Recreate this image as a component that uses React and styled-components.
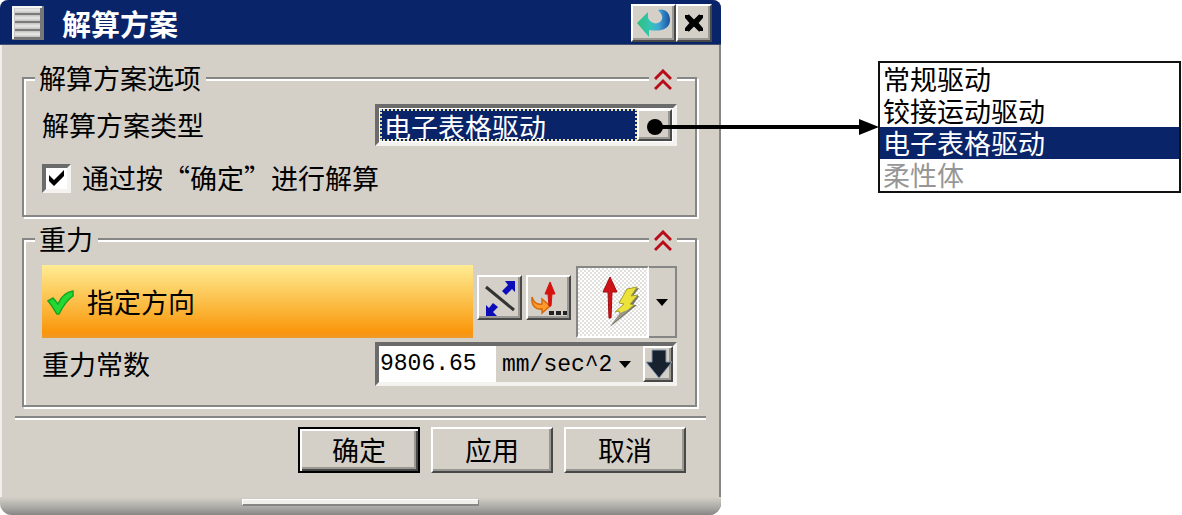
import React, { useState } from "react";
import styled, { createGlobalStyle, css } from "styled-components";

const navy = "#0a246a";
const face = "#d4d0c8";
const shade = "#868684";
const dark = "#484848";
const sans = '"Noto Sans CJK SC", "Noto Sans", sans-serif';
const mono = '"Liberation Mono", monospace';

const GlobalStyle = createGlobalStyle`
  *, *::before, *::after { box-sizing: border-box; }
  body { margin: 0; background: #fff; color: #000; font: 27px/32px ${sans}; }
  button, input, select { margin: 0; color: inherit; font: inherit; }
`;

const raised = css`
  border: 2px solid;
  border-color: #fff ${dark} ${dark} #fff;
  box-shadow: inset -2px -2px 0 #9a9892;
  background: ${face};
`;

const sunken = css`
  border: 4px solid;
  border-color: #6b6b6b #f4f3f0 #f4f3f0 #6b6b6b;
`;

const Page = styled.main`
  display: grid;
  grid-template-columns: minmax(0, 1fr) 157px 303px;
  align-items: start;
  padding-right: 1px;
`;

const Dialog = styled.form`
  display: flex;
  flex-direction: column;
  overflow: hidden;
  border-radius: 8px 8px 12px 12px;
  background: ${face};
  box-shadow: inset 2px 0 0 #f0efec, inset -2px 0 0 ${shade};
`;

const TitleBar = styled.header`
  display: flex;
  align-items: center;
  height: 45px;
  padding: 1px 9px 0 12px;
  background: ${navy};
  border-bottom: 1px solid #44506e;
  color: #fff;
`;

const Title = styled.h1`
  flex: 1;
  margin: 0;
  padding-left: 18px;
  font-size: 29px;
  line-height: 40px;
  font-weight: 700;
`;

const TitleButton = styled.button`
  ${raised}
  display: grid;
  place-items: center;
  width: ${(p) => (p.$wide ? 45 : 36)}px;
  height: 38px;
  padding: 0;
`;

const Body = styled.div`
  display: flex;
  flex-direction: column;
  gap: 8px;
  padding: 19px 24px 9px 22px;
`;

const GroupShell = styled.div`
  position: relative;
`;

const GroupBox = styled.fieldset`
  display: flex;
  flex-direction: column;
  gap: ${(p) => p.$gap}px;
  min-width: 0;
  margin: 0;
  padding: 12px 18px 19px;
  border: 2px solid ${shade};
  box-shadow: inset 2px 2px 0 #fff, 2px 2px 0 #fff;
`;

const Legend = styled.legend`
  margin-left: -7px;
  padding: 0 5px 0 4px;
  background: ${face};
  line-height: 28px;
`;

const Collapse = styled.button`
  position: absolute;
  top: 0;
  right: 20px;
  display: grid;
  place-items: center;
  width: 28px;
  height: 32px;
  padding: 0;
  border: 0;
  background: ${face};
`;

const Row = styled.div`
  display: grid;
  grid-template-columns: minmax(0, 1fr) 302px;
  align-items: center;
`;

const ComboFrame = styled.div`
  ${sunken}
  display: flex;
  height: ${(p) => (p.$tall ? 44 : 42)}px;
  padding: ${(p) => (p.$tall ? 0 : 1)}px;
  background: ${(p) => (p.$tall ? face : "#fff")};
`;

const TypeSelect = styled.select`
  flex: 1;
  min-width: 0;
  appearance: none;
  padding: 2px 2px 0;
  border: 2px dotted #e8dfa8;
  border-radius: 0;
  outline: 0;
  background: ${navy};
  color: #fff;
  line-height: 28px;
`;

const SquareButton = styled.button`
  ${raised}
  display: grid;
  place-items: center;
  flex: none;
  width: ${(p) => p.$width}px;
  height: ${(p) => (p.$height ? `${p.$height}px` : "auto")};
  padding: 0;
`;

const CheckRow = styled.label`
  display: flex;
  align-items: center;
  gap: 11px;
  height: 36px;
`;

const CheckBox = styled.input`
  ${sunken}
  appearance: none;
  width: 29px;
  height: 29px;
  background: #fff;
  &:checked {
    background: #fff url("data:image/svg+xml,%3Csvg xmlns='http://www.w3.org/2000/svg' viewBox='0 0 21 21'%3E%3Cpath d='M3 7v6l5 5L18 8V2L8 12Z'/%3E%3C/svg%3E") center / 21px no-repeat;
  }
`;

const DirectionRow = styled.div`
  display: flex;
  align-items: center;
`;

const DirectionStep = styled.div`
  display: flex;
  align-items: center;
  gap: 12px;
  flex: 1;
  height: 73px;
  margin-right: 4px;
  padding-left: 4px;
  background: linear-gradient(#ffec94, #fbb63a 60%, #fa960c 92%, #ee9a28);
`;

const StepTools = styled.div`
  display: flex;
  gap: 4px;
  margin: 0 5px 8px 0;
`;

const VectorButton = styled.button`
  display: grid;
  place-items: center;
  width: 73px;
  height: 72px;
  padding: 0;
  border: 2px solid;
  border-color: ${shade} #fff #fff ${shade};
  background: repeating-conic-gradient(#fff 0 25%, #e2e0dc 0 50%) 0 0 / 4px 4px;
`;

const VectorMenuButton = styled.button`
  display: grid;
  place-items: center;
  width: 28px;
  height: 72px;
  padding: 0;
  border: 2px solid ${shade};
  border-left: 0;
  background: ${face};
`;

const NumberBox = styled.input`
  width: 117px;
  height: 100%;
  padding: 0 1px;
  border: 0;
  outline: 0;
  background: #fff;
  font: 23px/32px ${mono};
`;

const UnitSelect = styled.select`
  appearance: none;
  flex: 1;
  min-width: 0;
  padding: 2px 0 0 6px;
  border: 0;
  outline: 0;
  background: transparent;
  font: 23px/32px ${mono};
`;

const UnitCaret = styled.span`
  display: grid;
  place-items: center;
  width: 28px;
  padding-right: 8px;
`;

const Divider = styled.hr`
  align-self: stretch;
  height: 4px;
  margin: 0 15px;
  border: 0;
  border-top: 2px solid ${shade};
  background: #fff;
`;

const Actions = styled.div`
  display: flex;
  justify-content: flex-end;
  gap: 11px;
  padding: 7px 35px 24px;
`;

const ActionButton = styled.button`
  ${raised}
  width: 122px;
  height: 46px;
  padding: 0;
  ${(p) => p.$primary && css`
    border-color: #000;
    box-shadow: inset 2px 2px 0 #fff, inset -2px -2px 0 ${dark}, inset -4px -4px 0 #9a9892;
  `}
`;

const Footer = styled.footer`
  display: flex;
  justify-content: center;
  height: 18px;
  padding-top: 2px;
  background: linear-gradient(${face}, #aaa8a4 60%, #858585);
`;

const Grip = styled.span`
  width: 33%;
  height: 7px;
  border: 1px solid;
  border-color: #fff ${shade} ${shade} #fff;
  border-bottom-width: 2px;
  background: #f0efec;
`;

const Connector = styled.div`
  position: relative;
  align-self: stretch;
`;

const ConnectorLine = styled.svg`
  position: absolute;
  top: 117px;
  right: -1px;
`;

const OptionList = styled.ul`
  margin: 61px 0 0;
  padding: 0;
  border: 2px solid #111;
  background: #fff;
  list-style: none;
`;

const Option = styled.li`
  height: 32px;
  padding-left: 3px;
  background: ${(p) => (p.$state === "selected" ? navy : "#fff")};
  color: ${(p) => ({ selected: "#fff", disabled: "#969696" })[p.$state] || "#000"};
  white-space: nowrap;
`;

const MenuIcon = () => (
  <svg width="32" height="34" viewBox="0 0 32 34" aria-hidden="true">
    <path d="M0 0h32v34H0z" fill="#777" />
    <path d="M0 0h30v2H2v31H0z" fill="#f4f4f4" />
    <path d="M2 2h26v29H2z" fill="#c8c8c5" />
    <path d="M3 4h25M3 12h25M3 20h25M3 28h25" stroke="#e2e2e0" strokeWidth="3" />
    <path d="M3 8h25M3 16h25M3 24h25" stroke="#7b7b7b" strokeWidth="2" />
  </svg>
);

const ResetIcon = () => (
  <svg width="36" height="32" viewBox="0 0 36 32" aria-hidden="true">
    <defs>
      <linearGradient id="reset" x1="0" x2="1">
        <stop offset="0" stopColor="#2cc07a" />
        <stop offset=".4" stopColor="#35c4b4" />
        <stop offset=".65" stopColor="#3fa9d6" />
        <stop offset="1" stopColor="#1b4fa0" />
      </linearGradient>
    </defs>
    <path d="M1 16 12 5v6c3 7 12 7 14 1 1-3-1-6-4-9 6-2 12 2 12 10 0 9-9 12-21 10v7Z" fill="url(#reset)" />
  </svg>
);

const CloseIcon = () => (
  <svg width="22" height="22" viewBox="0 0 22 22" aria-hidden="true">
    <path d="M4 3v2l5 6-5 6v2M18 3v2l-5 6 5 6v2" fill="none" stroke="#000" strokeWidth="4" />
    <path d="M4 4 18 18M18 4 4 18" stroke="#000" strokeWidth="5" />
  </svg>
);

const ChevronsIcon = () => (
  <svg width="18" height="22" viewBox="0 0 18 22" aria-hidden="true">
    <path d="m1 10 8-8 8 8M1 20l8-8 8 8" fill="none" stroke="#b80c18" strokeWidth="3" />
  </svg>
);

const CheckIcon = () => (
  <svg width="29" height="28" viewBox="0 0 29 28" aria-hidden="true">
    <path d="m2 13 5-3 5 6C15 9 20 4 27 3v5c-6 4-10 10-14 18h-2C8 22 6 17 2 13Z" fill="#22d934" stroke="#14a524" strokeWidth="1.5" />
  </svg>
);

const ReverseIcon = () => (
  <svg width="38" height="38" viewBox="0 0 38 38" aria-hidden="true">
    <path d="M5 8 33 31" stroke="#333" strokeWidth="3" />
    <path d="M34 2v11l-3-3-6 6-4-4 6-6-3-4ZM5 37V26l3 3 4-5 5 4-5 5 4 4Z" fill="#0c0cb8" />
  </svg>
);

const VectorDialogIcon = () => (
  <svg width="38" height="38" viewBox="0 0 38 38" aria-hidden="true">
    <path d="M2 18c2 6 6 8 10 7v-5l8 7-8 7v-4C6 31 1 27 2 18Z" fill="#ff9a2b" stroke="#d66a0c" strokeWidth="1.5" />
    <path d="m20 3 5 12h-3l-1 12h-2l-1-12h-3Z" fill="#d5120f" stroke="#d5120f" />
    <path d="M19 32h5v4h-5zM26 32h5v4h-5zM33 32h4v4h-4z" fill="#222" />
  </svg>
);

const InferredVectorIcon = () => (
  <svg width="54" height="52" viewBox="-16 0 54 52" aria-hidden="true">
    <path d="M8 1 15 16H10L9 42H7L6 16H1Z" fill="#cf1215" stroke="#a00c10" />
    <path d="m27 13 10-1-6 8h6l-6 9h4L8 51l12-15-5-1 9-7-6-1Z" fill="#77756a" />
    <path d="m25 13 10-2-6 9 7-1-8 9 4 1-13 11-2-5-4 1 9-8-5-1Z" fill="#ece33a" stroke="#a39f33" />
    <path d="m8 50 10-13 10-4Z" fill="#99968b" />
  </svg>
);

const CaretIcon = () => (
  <svg width="14" height="8" viewBox="0 0 14 8" aria-hidden="true">
    <path d="M1 1h12L7 8Z" />
  </svg>
);

const DownArrowIcon = () => (
  <svg width="28" height="30" viewBox="0 0 28 30" aria-hidden="true">
    <path d="M7 1h14v12h6L14 29 1 13h6Z" fill="#17222e" stroke="#8799ad" strokeWidth="1" />
  </svg>
);

const OPTIONS = ["常规驱动", "铰接运动驱动", "电子表格驱动", "柔性体"];

function Group({ title, gap, children }) {
  return (
    <GroupShell>
      <GroupBox $gap={gap}>
        <Legend>{title}</Legend>
        {children}
      </GroupBox>
      <Collapse type="button" aria-label={`折叠${title}`}>
        <ChevronsIcon />
      </Collapse>
    </GroupShell>
  );
}

export default function App() {
  const [type, setType] = useState(OPTIONS[2]);
  const [solve, setSolve] = useState(true);
  const [gravity, setGravity] = useState("9806.65");

  return (
    <>
      <GlobalStyle />
      <Page lang="zh-CN">
        <Dialog onSubmit={(e) => e.preventDefault()}>
          <TitleBar>
            <MenuIcon />
            <Title>解算方案</Title>
            <TitleButton type="button" $wide aria-label="重置"><ResetIcon /></TitleButton>
            <TitleButton type="button" aria-label="关闭"><CloseIcon /></TitleButton>
          </TitleBar>

          <Body>
            <Group title="解算方案选项" gap={14}>
              <Row>
                <label htmlFor="type">解算方案类型</label>
                <ComboFrame>
                  <TypeSelect id="type" value={type} onChange={(e) => setType(e.target.value)}>
                    {OPTIONS.map((o) => (
                      <option key={o} disabled={o === OPTIONS[3]}>{o}</option>
                    ))}
                  </TypeSelect>
                  <SquareButton type="button" $width={35} aria-label="展开列表" />
                </ComboFrame>
              </Row>
              <CheckRow>
                <CheckBox type="checkbox" checked={solve} onChange={(e) => setSolve(e.target.checked)} />
                通过按“确定”进行解算
              </CheckRow>
            </Group>

            <Group title="重力" gap={4}>
              <DirectionRow>
                <DirectionStep><CheckIcon />指定方向</DirectionStep>
                <StepTools>
                  <SquareButton type="button" $width={45} $height={45} aria-label="反向"><ReverseIcon /></SquareButton>
                  <SquareButton type="button" $width={45} $height={45} aria-label="矢量对话框"><VectorDialogIcon /></SquareButton>
                </StepTools>
                <VectorButton type="button" aria-label="自动判断的矢量"><InferredVectorIcon /></VectorButton>
                <VectorMenuButton type="button" aria-label="矢量类型"><CaretIcon /></VectorMenuButton>
              </DirectionRow>
              <Row>
                <label htmlFor="gravity">重力常数</label>
                <ComboFrame $tall>
                  <NumberBox id="gravity" value={gravity} onChange={(e) => setGravity(e.target.value)} />
                  <UnitSelect aria-label="单位"><option>mm/sec^2</option></UnitSelect>
                  <UnitCaret><CaretIcon /></UnitCaret>
                  <SquareButton type="button" $width={30} aria-label="更多选项"><DownArrowIcon /></SquareButton>
                </ComboFrame>
              </Row>
            </Group>
          </Body>

          <Divider />
          <Actions>
            <ActionButton type="submit" $primary>确定</ActionButton>
            <ActionButton type="button">应用</ActionButton>
            <ActionButton type="button">取消</ActionButton>
          </Actions>
          <Footer><Grip /></Footer>
        </Dialog>

        <Connector>
          <ConnectorLine width="232" height="20" viewBox="0 0 232 20" aria-hidden="true">
            <circle cx="8" cy="10" r="8" />
            <path d="M8 8h204V2l20 8-20 8v-6H8Z" />
          </ConnectorLine>
        </Connector>

        <OptionList role="listbox" aria-label="解算方案类型">
          {OPTIONS.map((o, i) => (
            <Option
              key={o}
              role="option"
              aria-selected={o === type}
              aria-disabled={i === 3}
              $state={o === type ? "selected" : i === 3 ? "disabled" : "normal"}
            >
              {o}
            </Option>
          ))}
        </OptionList>
      </Page>
    </>
  );
}
